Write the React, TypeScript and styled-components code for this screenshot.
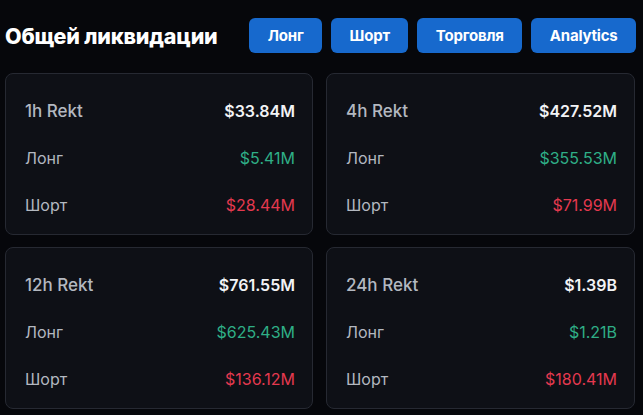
import React from 'react';
import styled, { createGlobalStyle } from 'styled-components';

const GlobalStyle = createGlobalStyle`
    html, body {
        margin: 0;
        padding: 0;
        background: #06070b;
    }
    body {
        font-family: Inter, "Noto Sans", sans-serif;
        color: #eaecef;
    }
`;

interface Stat {
    period: string;
    total: string;
    long: string;
    short: string;
}

const stats: Stat[] = [
    { period: '1h Rekt', total: '$33.84M', long: '$5.41M', short: '$28.44M' },
    { period: '4h Rekt', total: '$427.52M', long: '$355.53M', short: '$71.99M' },
    { period: '12h Rekt', total: '$761.55M', long: '$625.43M', short: '$136.12M' },
    { period: '24h Rekt', total: '$1.39B', long: '$1.21B', short: '$180.41M' },
];

const tabs = ['Лонг', 'Шорт', 'Торговля', 'Analytics'];

const Page = styled.div`
    width: 643px;
    height: 415px;
    box-sizing: border-box;
    padding: 18px 7px 0 5px;
    overflow: hidden;
`;

const Header = styled.div`
    display: flex;
    align-items: center;
    justify-content: space-between;
    height: 35px;
`;

const Title = styled.h1`
    margin: 0;
    font-size: 21.5px;
    font-weight: 800;
    color: #ffffff;
    letter-spacing: -0.2px;
`;

const Tabs = styled.div`
    display: flex;
    gap: 9px;
`;

const Tab = styled.button`
    height: 35px;
    padding: 0 18.5px;
    border: none;
    border-radius: 6px;
    background: #1769cd;
    color: #ffffff;
    font-family: Inter, "Noto Sans", sans-serif;
    font-size: 15px;
    font-weight: 700;
    letter-spacing: -0.2px;
    cursor: pointer;
`;

const Grid = styled.div`
    margin-top: 20px;
    display: grid;
    grid-template-columns: 308px 309px;
    grid-auto-rows: 162px;
    column-gap: 13px;
    row-gap: 12px;
`;

const Card = styled.div`
    box-sizing: border-box;
    background: #0e1016;
    border: 1px solid #262932;
    border-radius: 8px;
    padding: 23px 17px 0 19px;
    display: flex;
    flex-direction: column;
    gap: 20px;
`;

const Row = styled.div`
    display: flex;
    justify-content: space-between;
    align-items: center;
    height: 27px;
`;

const Label = styled.span<{ $strong?: boolean }>`
    font-size: ${p => (p.$strong ? 17 : 16)}px;
    font-weight: ${p => (p.$strong ? 500 : 400)};
    color: #b3b8c0;
`;

const Value = styled.span<{ $tone: 'total' | 'long' | 'short' }>`
    font-size: 16px;
    font-weight: ${p => (p.$tone === 'total' ? 600 : 400)};
    color: ${p => (p.$tone === 'total' ? '#f2f3f5' : p.$tone === 'long' ? '#2fae86' : '#e4394f')};
`;

const StatCard: React.FC<{ stat: Stat }> = ({ stat }) => (
    <Card>
        <Row>
            <Label $strong>{stat.period}</Label>
            <Value $tone="total">{stat.total}</Value>
        </Row>
        <Row>
            <Label>Лонг</Label>
            <Value $tone="long">{stat.long}</Value>
        </Row>
        <Row>
            <Label>Шорт</Label>
            <Value $tone="short">{stat.short}</Value>
        </Row>
    </Card>
);

export default function App() {
    return (
        <Page>
            <GlobalStyle />
            <Header>
                <Title>Общей ликвидации</Title>
                <Tabs>
                    {tabs.map(t => (
                        <Tab key={t}>{t}</Tab>
                    ))}
                </Tabs>
            </Header>
            <Grid>
                {stats.map(s => (
                    <StatCard key={s.period} stat={s} />
                ))}
            </Grid>
        </Page>
    );
}
